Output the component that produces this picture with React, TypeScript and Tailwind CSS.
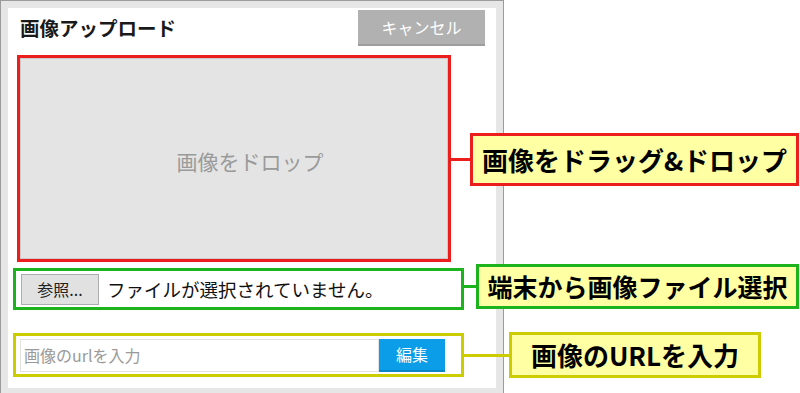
import { useState } from 'react'

type Tone = { line: string; border: string }

const tones: Record<'red' | 'green' | 'olive', Tone> = {
  red: { line: 'bg-[#ec1d1d]', border: 'border-[#ec1d1d]' },
  green: { line: 'bg-[#1db31d]', border: 'border-[#1db31d]' },
  olive: { line: 'bg-[#cccc00]', border: 'border-[#cccc00]' },
}

// connector line + yellow note, laid over the panel edge
function Callout({
  className,
  tone,
  lineW,
  boxW,
  boxH,
  size,
  text,
}: {
  className: string
  tone: Tone
  lineW: string
  boxW: string
  boxH: string
  size: string
  text: string
}) {
  return (
    <div className={`absolute flex items-center ${className}`}>
      <div className={`h-[3px] ${lineW} ${tone.line}`} />
      <div
        className={`flex items-center justify-center bg-[#ffffa3] border-[3px] font-bold text-black leading-none ${tone.border} ${boxW} ${boxH} ${size}`}
      >
        {text}
      </div>
    </div>
  )
}

export default function App() {
  const [url, setUrl] = useState('')

  return (
    <div className="relative w-[800px] h-[393px] overflow-hidden bg-white font-['Noto_Sans_CJK_JP',sans-serif]">
      <div className="w-[504px] h-[396px] border border-[#9c9c9c] bg-[#e6e6e6] p-[7px]">
        <div className="h-full bg-white pt-[2px] flex flex-col">
          <div className="flex items-start justify-between pl-[12px] pr-[11px] h-[36px]">
            <h1 className="self-center text-[19.5px] font-bold text-[#1a1a1a] leading-none">画像アップロード</h1>
            <button className="w-[127px] h-[36px] bg-[#b1b1b1] border-b-2 border-[#9d9d9d] text-white text-[16px] leading-none">
              キャンセル
            </button>
          </div>

          <div className="ml-[9px] mt-[9px] w-[434px] h-[207px] border-[3px] border-[#ec1d1d]">
            <div className="h-full border border-[#cacaca] bg-[#e4e4e4] flex items-center justify-center pl-[32px] pt-[6px] text-[21px] text-[#9a9a9a] leading-none">
              画像をドロップ
            </div>
          </div>

          <div className="ml-[5px] mt-[6px] w-[451px] h-[42px] border-[3px] border-[#1db31d] flex items-center gap-[8px] pl-[5px]">
            <button className="w-[78px] h-[31px] bg-[#e1e1e1] border border-[#adadad] text-[16px] text-[#222] leading-none">
              参照...
            </button>
            <span className="text-[18.5px] text-[#111] leading-none">ファイルが選択されていません。</span>
          </div>

          <div className="ml-[5px] mt-[23px] w-[451px] h-[44px] border-[3px] border-[#cccc00] flex items-center pl-[4px]">
            <input
              value={url}
              onChange={e => setUrl(e.target.value)}
              placeholder="画像のurlを入力"
              className="w-[359px] h-[33px] border border-[#e2e2e2] px-[3px] text-[16px] text-[#222] placeholder:text-[#9a9a9a] outline-none"
            />
            <button className="w-[66px] h-[33px] bg-[#0c9de8] border-b-2 border-[#0a86c6] text-white text-[16px] leading-none">
              編集
            </button>
          </div>
        </div>
      </div>

      <Callout
        className="left-[451px] top-[133px]"
        tone={tones.red}
        lineW="w-[19px]"
        boxW="w-[329px]"
        boxH="h-[53px]"
        size="text-[26px]"
        text="画像をドラッグ&ドロップ"
      />
      <Callout
        className="left-[464px] top-[264px]"
        tone={tones.green}
        lineW="w-[12px]"
        boxW="w-[323px]"
        boxH="h-[45px]"
        size="text-[25px]"
        text="端末から画像ファイル選択"
      />
      <Callout
        className="left-[464px] top-[332px]"
        tone={tones.olive}
        lineW="w-[45px]"
        boxW="w-[252px]"
        boxH="h-[46px]"
        size="text-[26px]"
        text="画像のURLを入力"
      />
    </div>
  )
}
